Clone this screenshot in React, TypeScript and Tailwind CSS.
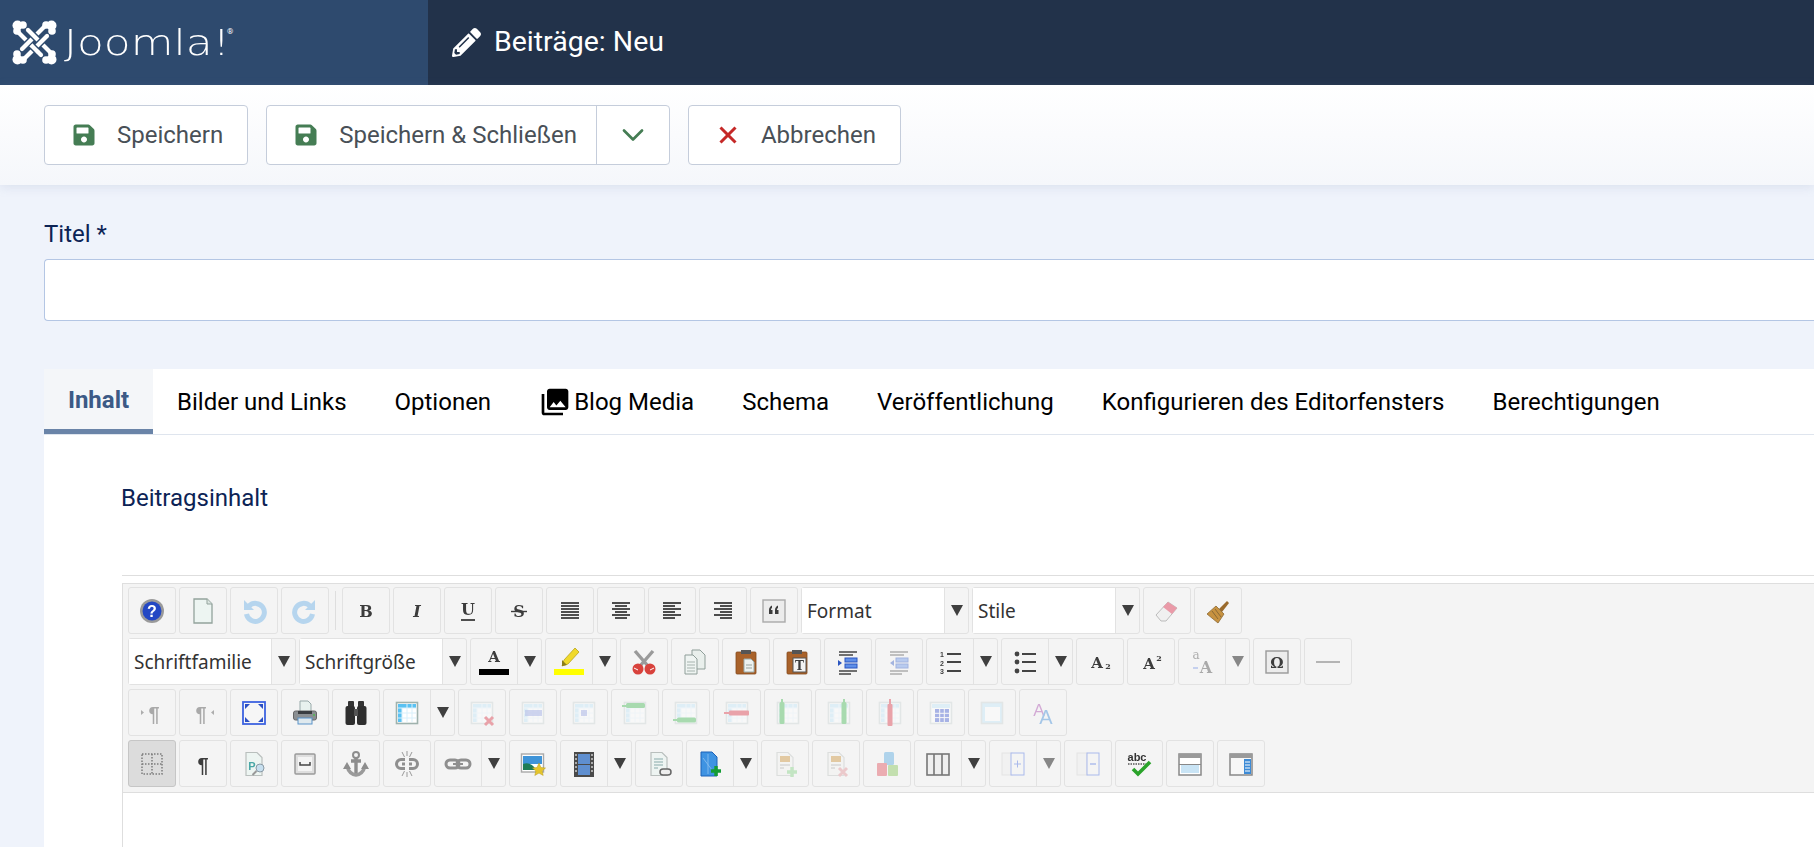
import { ReactNode } from 'react';
import { ChevronDown, X } from 'lucide-react';
import { FaPencilAlt, FaSave } from 'react-icons/fa';
import { MdPhotoLibrary } from 'react-icons/md';

const tabs = ['Bilder und Links', 'Optionen', 'Blog Media', 'Schema', 'Veröffentlichung', 'Konfigurieren des Editorfensters', 'Berechtigungen'];

function Ico({ children, dim }: { children: ReactNode; dim?: boolean }) {
    return (
        <svg viewBox="0 0 28 28" className={`h-[28px] w-[28px] blur-[0.4px] ${dim ? 'opacity-40' : ''}`}>
            {children}
        </svg>
    );
}

function Glyph({ t, font = 'DejaVu Serif', size = 16, bold = true, italic = false, y = 20, x = 14 }: { t: string; font?: string; size?: number; bold?: boolean; italic?: boolean; y?: number; x?: number }) {
    return (
        <text x={x} y={y} textAnchor="middle" fontFamily={font} fontSize={size} fontWeight={bold ? 700 : 400} fontStyle={italic ? 'italic' : 'normal'} fill="#3c3c3c">
            {t}
        </text>
    );
}

function Lines({ rows, color = '#3a3a3a' }: { rows: number[][]; color?: string }) {
    return (
        <g stroke={color} strokeWidth="1.8">
            {rows.map(([x, w], i) => (
                <line key={i} x1={x} x2={x + w} y1={6 + i * 3} y2={6 + i * 3} />
            ))}
        </g>
    );
}

function Table({ fill = '#bfe6fb', grid = '#e8f6fd', frame = '#c8d2d2' }: { fill?: string; grid?: string; frame?: string }) {
    return (
        <g>
            <rect x="3.5" y="3.5" width="21" height="21" fill="#fff" stroke={frame} strokeWidth="1.6" />
            <rect x="5" y="5" width="18" height="4" fill={fill} />
            <rect x="5" y="9" width="4" height="14" fill={fill} />
            <g stroke={grid} strokeWidth="1">
                <path d="M9 9v14M14 5v18M19 5v18M5 9h18M5 14h18M5 19h18" />
            </g>
        </g>
    );
}

function Doc({ fill = '#f3f3f1', stroke = '#b9bfbd' }: { fill?: string; stroke?: string }) {
    return <path d="M6 2.5h11l5 5v18H6z" fill={fill} stroke={stroke} strokeWidth="1.2" />;
}

function Clipboard({ children }: { children: ReactNode }) {
    return (
        <g>
            <rect x="4" y="4" width="20" height="22" rx="1" fill="#a9622a" stroke="#84491c" strokeWidth="0.8" />
            <rect x="9" y="2" width="10" height="4" fill="#555" />
            {children}
        </g>
    );
}

const Cross = ({ x = 21, y = 22, c = '#e08a90' }: { x?: number; y?: number; c?: string }) => <path d={`M${x - 4} ${y - 4}l8 8M${x + 4} ${y - 4}l-8 8`} stroke={c} strokeWidth="3" />;
const Plus = ({ x = 21, y = 22, c = '#7bcf7b' }: { x?: number; y?: number; c?: string }) => <path d={`M${x - 5} ${y}h10M${x} ${y - 5}v10`} stroke={c} strokeWidth="3.4" />;

const Icons: Record<string, ReactNode> = {
    help: (
        <Ico>
            <circle cx="14" cy="14" r="12" fill="#9a9a9a" />
            <circle cx="14" cy="14" r="9.5" fill="#2448c4" />
            <text x="14" y="20" textAnchor="middle" fontFamily="Liberation Sans" fontWeight="700" fontSize="16" fill="#fff">?</text>
        </Ico>
    ),
    page: <Ico><path d="M5 2h13l5 5v19H5z" fill="#edf5f2" stroke="#93a39c" strokeWidth="1.3" /><path d="M18 2v5h5" fill="#dce6e2" stroke="#93a39c" /></Ico>,
    undo: <Ico dim><path d="M9 9a9 9 0 1 1-2.5 8" fill="none" stroke="#5aa8e6" strokeWidth="5" /><path d="M4 3v10h10z" fill="#5aa8e6" /></Ico>,
    redo: <Ico dim><path d="M19 9a9 9 0 1 0 2.5 8" fill="none" stroke="#5aa8e6" strokeWidth="5" /><path d="M24 3v10h-10z" fill="#5aa8e6" /></Ico>,
    bold: <Ico><Glyph t="B" /></Ico>,
    italic: <Ico><Glyph t="I" italic /></Ico>,
    underline: <Ico><Glyph t="U" y={18} /><path d="M7 23h14" stroke="#3c3c3c" strokeWidth="1.8" /></Ico>,
    strike: <Ico><Glyph t="S" /><path d="M6 14.5h16" stroke="#3c3c3c" strokeWidth="1.4" /></Ico>,
    justify: <Ico><Lines rows={[[5, 18], [5, 18], [5, 18], [5, 18], [5, 18], [5, 18]]} /></Ico>,
    center: <Ico><Lines rows={[[5, 18], [8, 12], [5, 18], [8, 12], [5, 18], [8, 12]]} /></Ico>,
    left: <Ico><Lines rows={[[5, 18], [5, 12], [5, 18], [5, 12], [5, 18], [5, 12]]} /></Ico>,
    right: <Ico><Lines rows={[[5, 18], [11, 12], [5, 18], [11, 12], [5, 18], [11, 12]]} /></Ico>,
    quote: (
        <Ico>
            <rect x="3" y="3" width="22" height="22" fill="#ececec" stroke="#aaa" strokeWidth="1.4" />
            <path d="M9 17v-4c0-2 1-3.500 3-4.500v2.500c-.7.400-1 .900-1 2h1.500v4zM15 17v-4c0-2 1-3.500 3-4.500v2.500c-.7.400-1 .900-1 2h1.500v4z" fill="#3c3c3c" />
        </Ico>
    ),
    eraser: (
        <Ico>
            <path d="M3 18 15 5l9 6-11 13H8z" fill="#f0f0f0" stroke="#bbb" />
            <path d="M15 5l9 6-5 6-9-7z" fill="#ea9aa8" />
        </Ico>
    ),
    brush: (
        <Ico>
            <path d="M15 12 23 4l2 2-7 9z" fill="#9a6a2c" />
            <path d="M12 9l8 8-6 9L3 17z" fill="#c79240" stroke="#8b6a35" strokeWidth="0.8" />
            <path d="M8 14l6 8M11 12l6 8" stroke="#8b6a35" />
        </Ico>
    ),
    cut: (
        <Ico>
            <path d="M5 3l13 15M23 3 10 18" stroke="#9a9a9a" strokeWidth="3.4" />
            <circle cx="8" cy="21" r="5.5" fill="#d8423c" />
            <circle cx="20" cy="21" r="5.5" fill="#d8423c" />
            <path d="M4 20l4 2M24 20l-4 2" stroke="#fff" strokeWidth="1" />
        </Ico>
    ),
    copy: (
        <Ico>
            <path d="M11 2h8l5 5v14H11z" fill="#e9efec" stroke="#8f9e99" />
            <path d="M4 7h8l4 4v15H4z" fill="#eff4f2" stroke="#8f9e99" />
            <path d="M6 14h8M6 17h8M6 20h8M6 23h8" stroke="#a6b3ae" />
        </Ico>
    ),
    paste: <Ico><Clipboard><path d="M12 11h7l3 3v10H12z" fill="#edf2f0" stroke="#9aa" /><path d="M14 17h6M14 20h6" stroke="#99a5a0" /></Clipboard></Ico>,
    pasteText: <Ico><Clipboard><rect x="10" y="10" width="13" height="14" fill="#f3f3f3" stroke="#555" /><Glyph t="T" size={12} x={16.5} y={22} /></Clipboard></Ico>,
    indent: (
        <Ico>
            <path d="M5 4h18M5 7h14M5 23h18M5 26h12" stroke="#444" strokeWidth="1.6" />
            <rect x="11" y="10" width="12" height="4" fill="#5f8fe8" stroke="#2b55c0" />
            <rect x="11" y="16" width="12" height="4" fill="#5f8fe8" stroke="#2b55c0" />
            <path d="M4 12v6l4-3z" fill="#2b55c0" />
        </Ico>
    ),
    outdent: (
        <Ico dim>
            <path d="M5 4h18M5 7h14M5 23h18M5 26h12" stroke="#444" strokeWidth="1.6" />
            <rect x="11" y="10" width="12" height="4" fill="#5f8fe8" stroke="#2b55c0" />
            <rect x="11" y="16" width="12" height="4" fill="#5f8fe8" stroke="#2b55c0" />
            <path d="M9 12v6l-4-3z" fill="#2b55c0" />
        </Ico>
    ),
    ol: (
        <Ico>
            <Glyph t="1" size={7} x={6} y={9} font="Liberation Sans" />
            <Glyph t="2" size={7} x={6} y={17.5} font="Liberation Sans" />
            <Glyph t="3" size={7} x={6} y={26} font="Liberation Sans" />
            <path d="M11 6h14M11 14h14M11 23h14" stroke="#444" strokeWidth="1.8" />
        </Ico>
    ),
    ul: (
        <Ico>
            <circle cx="6" cy="6" r="2.4" fill="#444" /><circle cx="6" cy="14" r="2.4" fill="#444" /><circle cx="6" cy="23" r="2.4" fill="#444" />
            <path d="M11 6h14M11 14h14M11 23h14" stroke="#444" strokeWidth="1.8" />
        </Ico>
    ),
    sub: <Ico><Glyph t="A" size={15} x={11} y={20} /><Glyph t="2" size={8} x={22} y={21} /></Ico>,
    sup: <Ico><Glyph t="A" size={15} x={12} y={21} /><Glyph t="2" size={8} x={22} y={13} /></Ico>,
    fontCase: <Ico dim><Glyph t="a" size={12} x={8} y={11} bold={false} /><Glyph t="A" size={16} x={18} y={25} /><path d="M5 20h5" stroke="#5a7fe0" strokeWidth="1.5" /></Ico>,
    omega: <Ico><rect x="3" y="3" width="22" height="22" fill="#ececec" stroke="#999" strokeWidth="1.4" /><Glyph t="Ω" size={15} y={20} /></Ico>,
    hr: <Ico><path d="M2 14h24" stroke="#a4a4a4" strokeWidth="1.6" /></Ico>,
    textColor: <Ico><Glyph t="A" size={15} y={17} /></Ico>,
    highlight: <Ico><path d="M20 3l4 4-11 12-6 2 2-6z" fill="#f0d92b" stroke="#b9a41c" strokeWidth="0.8" /><path d="M7 15l5 5-5 1z" fill="#8a7d1a" /></Ico>,
    ltr: <Ico dim><Glyph t="¶" size={20} x={16} y={22} font="Liberation Sans" /><path d="M3 11v5l3-2.500z" fill="#444" /></Ico>,
    rtl: <Ico dim><Glyph t="¶" size={20} x={12} y={22} font="Liberation Sans" /><path d="M25 11v5l-3-2.500z" fill="#444" /></Ico>,
    full: (
        <Ico>
            <rect x="3" y="3" width="22" height="22" fill="#f6f6f6" stroke="#3d63e0" strokeWidth="1.8" />
            <path d="M5 5h5l-5 5zM23 5h-5l5 5zM5 23h5l-5-5zM23 23h-5l5-5z" fill="#2b4fc4" />
        </Ico>
    ),
    print: (
        <Ico>
            <path d="M9 2h8l3 3v8H9z" fill="#e8f1ee" stroke="#9aa" />
            <rect x="2.500" y="12" width="23" height="9" rx="2" fill="#8b8f92" stroke="#666" />
            <rect x="7" y="12" width="14" height="3" fill="#3a3d40" />
            <rect x="7" y="19" width="14" height="6" fill="#dfe9ee" stroke="#5a93c9" />
            <circle cx="23" cy="16" r="1" fill="#4fbb4f" />
        </Ico>
    ),
    search: (
        <Ico>
            <rect x="6" y="2" width="6" height="7" rx="1" fill="#333" /><rect x="16" y="2" width="6" height="7" rx="1" fill="#333" />
            <rect x="3.500" y="7" width="9.500" height="19" rx="2" fill="#2e2e2e" /><rect x="15" y="7" width="9.500" height="19" rx="2" fill="#2e2e2e" />
            <rect x="12" y="10" width="4" height="7" fill="#555" />
        </Ico>
    ),
    table: <Ico><Table fill="#59c1f2" grid="#d9f0fb" frame="#9fb2ad" /></Ico>,
    tableDel: <Ico dim><Table /><Cross c="#d9293a" /></Ico>,
    tableRowProps: <Ico dim><Table /><rect x="6" y="11" width="17" height="6" fill="#6a7fdc" opacity="0.7" /></Ico>,
    tableCell: <Ico dim><Table /><rect x="11" y="11" width="6" height="6" fill="#6a7fdc" opacity="0.7" /></Ico>,
    rowBefore: <Ico dim><Table /><path d="M1 7h5" stroke="#39b54a" strokeWidth="2" /><rect x="5" y="4" width="19" height="5" rx="1.500" fill="#39b54a" /></Ico>,
    rowAfter: <Ico dim><Table /><path d="M1 21h5" stroke="#39b54a" strokeWidth="2" /><rect x="5" y="18.500" width="19" height="5" rx="1.500" fill="#39b54a" /></Ico>,
    rowDel: <Ico dim><Table /><path d="M1 14h5" stroke="#d9293a" strokeWidth="2" /><rect x="6" y="11.500" width="20" height="5" rx="1" fill="#d9293a" /></Ico>,
    colBefore: <Ico dim><Table /><path d="M8 0v5" stroke="#39b54a" strokeWidth="2" /><rect x="5.500" y="3" width="5" height="22" rx="1.500" fill="#39b54a" /></Ico>,
    colAfter: <Ico dim><Table /><path d="M19 0v5" stroke="#39b54a" strokeWidth="2" /><rect x="16.500" y="3" width="5" height="22" rx="1.500" fill="#39b54a" /></Ico>,
    colDel: <Ico dim><Table /><path d="M14 0v5" stroke="#d9293a" strokeWidth="2" /><rect x="11.500" y="5" width="5" height="22" rx="1" fill="#d9293a" /></Ico>,
    tableGrid: <Ico dim><rect x="3.500" y="3.500" width="21" height="21" fill="#fff" stroke="#c8d2d2" strokeWidth="1.600" /><rect x="5" y="5" width="18" height="4" fill="#bfe6fb" /><rect x="8" y="10" width="14" height="13" fill="#3550d0" /><path d="M8 14.300h14M8 18.600h14M12.700 10v13M17.300 10v13" stroke="#fff" /></Ico>,
    tableBox: <Ico dim><rect x="3.500" y="3.500" width="21" height="21" fill="#bfe6fb" stroke="#c8d2d2" strokeWidth="1.600" /><rect x="7" y="8" width="15" height="14" fill="#fff" /></Ico>,
    styles: <Ico dim><text x="10" y="17" textAnchor="middle" fontFamily="Liberation Sans" fontSize="17" fill="#a23ea8">A</text><text x="17" y="25" textAnchor="middle" fontFamily="Liberation Sans" fontSize="20" fill="#2f83d6">A</text></Ico>,
    blocks: <Ico><g opacity="0.7"><rect x="4" y="4" width="20" height="20" fill="none" stroke="#555" strokeWidth="1.500" strokeDasharray="1.500 1.500" /><path d="M14 4v20M4 14h20" stroke="#555" strokeWidth="1.500" strokeDasharray="1.500 1.500" /></g></Ico>,
    pilcrow: <Ico><Glyph t="¶" size={20} y={22} font="Liberation Sans" /></Ico>,
    preview: <Ico><Doc fill="#edf5f2" /><text x="12" y="20" textAnchor="middle" fontFamily="Liberation Sans" fontWeight="700" fontSize="11" fill="#4aa7a7">P</text><circle cx="20" cy="18" r="4" fill="#c7dfef" stroke="#8b9aa5" /><path d="M16.500 21l-4 4" stroke="#999" strokeWidth="2" /></Ico>,
    pagebreak: <Ico><rect x="4" y="4" width="20" height="20" rx="1" fill="#dedede" stroke="#9a9a9a" strokeWidth="1.500" /><rect x="7" y="7" width="14" height="14" fill="#f4f4f4" /><path d="M9 12v3h10v-3" fill="none" stroke="#444" strokeWidth="1.500" /></Ico>,
    anchor: (
        <Ico>
            <circle cx="14" cy="5" r="3" fill="none" stroke="#8d8d8d" strokeWidth="2" />
            <path d="M14 8v17M9 11h10" stroke="#8d8d8d" strokeWidth="3.4" />
            <path d="M5 16q2 8 9 9q7-1 9-9" fill="none" stroke="#9a9a9a" strokeWidth="3.4" />
            <path d="M1 19l4-7 4 7zM19 19l4-7 4 7z" fill="#8d8d8d" />
        </Ico>
    ),
    unlink: (
        <Ico>
            <g fill="none" stroke="#8f8f8f" strokeWidth="3">
                <path d="M12 9.500H8a4.500 4.500 0 0 0 0 9h4M16 9.500h4a4.500 4.500 0 0 1 0 9h-4" />
                <path d="M9 14h3M16 14h3" />
            </g>
            <path d="M9 2l2.500 5M19 2l-2.500 5M14 1v5M9 26l2.500-5M19 26l-2.500-5M14 27v-5" stroke="#999" strokeWidth="1" />
        </Ico>
    ),
    link: <Ico><rect x="2" y="10" width="13" height="8" rx="4" fill="none" stroke="#8f8f8f" strokeWidth="3" /><rect x="13" y="10" width="13" height="8" rx="4" fill="none" stroke="#8f8f8f" strokeWidth="3" /><path d="M9 14h10" stroke="#8f8f8f" strokeWidth="2" /></Ico>,
    image: <Ico><rect x="2.500" y="4" width="22" height="18" fill="#fff" stroke="#a9a9a9" strokeWidth="1.400" /><rect x="4" y="6" width="19" height="8" fill="#3f94d8" /><path d="M4 20v-6c5-2 10 0 13 6z" fill="#1f7d56" /><path d="M20 13l2 4.500 4.500.500-3.300 3 1 4.500-4.200-2.400-4.200 2.400 1-4.500-3.300-3 4.500-.500z" fill="#e5c52c" stroke="#b89a1d" strokeWidth="0.500" /></Ico>,
    media: <Ico><rect x="4" y="2" width="20" height="25" fill="#4a4a4a" /><rect x="8" y="4" width="12" height="10" fill="#5f8fd0" /><rect x="8" y="15" width="12" height="10" fill="#5f8fd0" /><path d="M5 5h2M5 9h2M5 13h2M5 17h2M5 21h2M21 5h2M21 9h2M21 13h2M21 17h2M21 21h2" stroke="#ccc" strokeWidth="1.500" /></Ico>,
    article: <Ico><Doc fill="#eef4f2" /><path d="M9 9h9M9 12h9M9 15h9M9 18h4" stroke="#8aa" /><rect x="15" y="19" width="11" height="6" rx="3" fill="#eee" stroke="#666" strokeWidth="1.500" /></Ico>,
    template: <Ico><path d="M5 2h11l5 5v19H5z" fill="#3f93e2" stroke="#1d62b8" /><path d="M7 8l9 12M12 4v20" stroke="#8fc2f0" strokeWidth="0.800" /><Plus x={20} y={21} c="#149c34" /></Ico>,
    moduleAdd: <Ico dim><Doc /><rect x="9" y="6" width="10" height="6" fill="#c98b2a" /><path d="M9 15h10M9 18h4" stroke="#888" /><Plus /></Ico>,
    moduleDel: <Ico dim><Doc /><rect x="9" y="6" width="10" height="6" fill="#c98b2a" /><path d="M9 15h10M9 18h4" stroke="#888" /><Cross /></Ico>,
    cubes: <Ico dim><rect x="11" y="2" width="10" height="13" rx="1.500" fill="#4aa3e0" /><rect x="4" y="13" width="10" height="13" rx="1" fill="#e0434f" /><rect x="15" y="15" width="10" height="11" rx="1" fill="#7cc04a" /></Ico>,
    columns: <Ico><rect x="3" y="4" width="22" height="21" fill="#efefef" stroke="#777" strokeWidth="1.600" /><path d="M10 4v21M18 4v21" stroke="#777" strokeWidth="1.600" /></Ico>,
    colAdd: <Ico dim><rect x="3" y="3" width="10" height="22" fill="#eee" stroke="#ccc" /><rect x="12" y="3" width="13" height="22" fill="#f6f6f6" stroke="#3d63e0" /><path d="M15 14h7M18.500 10.500v7" stroke="#3d63e0" /></Ico>,
    colRemove: <Ico dim><rect x="3" y="3" width="10" height="22" fill="#eee" stroke="#ccc" /><rect x="13" y="3" width="12" height="22" fill="#f6f6f6" stroke="#3d63e0" /><path d="M16 14h6" stroke="#3d63e0" strokeWidth="1.400" /></Ico>,
    spell: <Ico><text x="12" y="11" textAnchor="middle" fontFamily="Liberation Sans" fontSize="11" fontWeight="700" fill="#333">abc</text><path d="M3 14h18" stroke="#555" strokeWidth="1.500" strokeDasharray="1.500 1" /><path d="M8 19l5 5L25 12" fill="none" stroke="#2aa32a" strokeWidth="3.600" /></Ico>,
    layout: <Ico><rect x="3" y="4" width="22" height="21" fill="#fff" stroke="#888" strokeWidth="1.500" /><rect x="3" y="4" width="22" height="4" fill="#9a9a9a" /><rect x="5" y="15" width="18" height="8" fill="#c9e4f5" /><path d="M3 14.500h22" stroke="#888" /></Ico>,
    sidebar: <Ico><rect x="3" y="4" width="22" height="21" fill="#f7f7f7" stroke="#888" strokeWidth="1.500" /><rect x="3" y="4" width="22" height="4" fill="#9a9a9a" /><rect x="17" y="9" width="7" height="15" fill="#3d8bd6" /><path d="M18 12h5M18 15h5M18 18h5M18 21h5" stroke="#fff" /></Ico>,
};

function Btn({ icon, active }: { icon: string; active?: boolean }) {
    return (
        <div className={`flex h-[47px] w-[48px] shrink-0 items-center justify-center rounded-[3px] border ${active ? 'border-[#c6c6c6] bg-[#dcdcdc]' : 'border-[#e2e2e2]'}`}>
            {Icons[icon]}
        </div>
    );
}

function Caret({ dim }: { dim?: boolean }) {
    return (
        <svg viewBox="0 0 12 11" className={`h-[11px] w-[12px] ${dim ? 'opacity-60' : ''}`}>
            <path d="M0 0h12L6 11z" fill="#3f3f3f" />
        </svg>
    );
}

function Split({ icon, dim, children }: { icon?: string; dim?: boolean; children?: ReactNode }) {
    return (
        <div className="flex h-[47px] w-[72px] shrink-0 rounded-[3px] border border-[#e2e2e2]">
            <div className="flex w-[47px] flex-col items-center justify-center border-r border-[#e2e2e2]">
                {icon ? Icons[icon] : children}
            </div>
            <div className="flex flex-1 items-center justify-center">
                <Caret dim={dim} />
            </div>
        </div>
    );
}

function Select({ label }: { label: string }) {
    return (
        <div className="flex h-[47px] w-[168px] shrink-0 rounded-[3px] border border-[#e2e2e2]">
            <div className="flex w-[143px] items-center border-r border-[#e2e2e2] bg-white pl-[5px] pt-[2px] font-['Noto_Sans',sans-serif] text-[19px] text-[#333]">
                {label}
            </div>
            <div className="flex flex-1 items-center justify-center">
                <Caret />
            </div>
        </div>
    );
}

function ColorBtn({ icon, color }: { icon: string; color: string }) {
    return (
        <Split>
            <div className="-mb-[4px] -mt-[3px] flex h-[28px] items-center">{Icons[icon]}</div>
            <div className={`h-[6px] w-[30px] ${color}`} />
        </Split>
    );
}

// four woven bands, each ending in a knob at one corner
function JoomlaMark() {
    const arms = [0, 90, 180, 270];
    return (
        <svg viewBox="0 0 45 45" className="h-[45px] w-[45px] shrink-0">
            {arms.map((r) => (
                <g key={r} transform={`rotate(${r} 22.5 22.5)`}>
                    <path d="M4 10 L29 35" fill="none" stroke="#2e4a6e" strokeWidth="7" />
                    <path d="M4 10 L29 35" fill="none" stroke="#fff" strokeWidth="4.2" strokeLinecap="round" />
                    <circle cx="5.5" cy="5.5" r="5" fill="#fff" />
                    <circle cx="11" cy="5" r="3.8" fill="#fff" />
                    <circle cx="5" cy="11" r="3.8" fill="#fff" />
                </g>
            ))}
            <path d="M20 26 L25 31" stroke="#2e4a6e" strokeWidth="7" />
            <path d="M19 25 L26 32" stroke="#fff" strokeWidth="4.2" />
        </svg>
    );
}

function ActionBtn({ icon, label }: { icon: ReactNode; label: string }) {
    return (
        <div className="flex h-[60px] items-center rounded-[4px] border border-[#c5cddb] bg-white pl-[28px] pr-[24px] text-[#495057]">
            <span className="mr-[22px] flex w-[22px] justify-center">{icon}</span>
            {label}
        </div>
    );
}

export default function App() {
    return (
        <div className="h-[847px] overflow-hidden bg-[#eff3fb] font-[Roboto,sans-serif] text-[24px]">
            {/* Header */}
            <header className="flex h-[85px] text-white">
                <div className="flex w-[428px] items-center bg-[#2e4a6e] pl-[12px]">
                    <JoomlaMark />
                    <span className="ml-[7px] w-[163px] origin-left scale-x-[1.22] font-['DejaVu_Sans',sans-serif] text-[36px] font-extralight leading-none">Joomla!</span>
                    <span className="mb-[22px] text-[8px]">®</span>
                </div>
                <div className="flex flex-1 items-center bg-[#22324a] pl-[24px]">
                    <FaPencilAlt className="mr-[13px] h-[29px] w-[29px]" />
                    <span className="text-[28.5px]">Beiträge: Neu</span>
                </div>
            </header>

            {/* Action bar */}
            <div className="relative flex h-[100px] items-center gap-[18px] bg-linear-to-b from-white to-[#f5f7fb] pl-[44px] shadow-[0_2px_10px_rgba(120,140,180,0.18)]">
                <ActionBtn icon={<FaSave className="h-[24px] w-[24px] text-[#457d54]" />} label="Speichern" />
                <div className="flex h-[60px] items-center rounded-[4px] border border-[#c5cddb] bg-white text-[#495057]">
                    <div className="flex h-full items-center border-r border-[#c5cddb] pl-[28px] pr-[19px]">
                        <span className="mr-[22px] flex w-[22px] justify-center">
                            <FaSave className="h-[24px] w-[24px] text-[#457d54]" />
                        </span>
                        Speichern &amp; Schließen
                    </div>
                    <div className="flex w-[72px] justify-center">
                        <ChevronDown className="h-[36px] w-[36px] text-[#457d54]" strokeWidth={1.8} />
                    </div>
                </div>
                <ActionBtn icon={<X className="h-[30px] w-[30px] shrink-0 text-[#c52827]" strokeWidth={2.4} strokeLinecap="butt" />} label="Abbrechen" />
            </div>

            <main className="pl-[44px]">
                <label className="block pt-[34px] leading-[30px] text-[#0c2355]">Titel *</label>
                <div className="mt-[10px] h-[62px] rounded-l-[4px] border border-r-0 border-[#b4c6e4] bg-white" />

                <section className="mt-[48px] bg-white">
                    {/* Tabs */}
                    <div className="flex h-[66px] border-b border-[#dfe5ee] text-black">
                        <div className="flex w-[109px] items-center justify-center border-b-[5px] border-[#6a84a8] bg-[#f4f6f9] pt-[2px] font-bold text-[#3c5a86]">
                            Inhalt
                        </div>
                        {tabs.map((tab) => (
                            <div key={tab} className="flex items-center px-[24px]">
                                {tab === 'Blog Media' && <MdPhotoLibrary className="mr-[3px] h-[32px] w-[32px]" />}
                                {tab}
                            </div>
                        ))}
                    </div>

                    {/* Editor */}
                    <div className="ml-[78px]">
                        <div className="-ml-px pt-[48px] leading-[30px] text-[#0c2355]">Beitragsinhalt</div>
                        <div className="mt-[62px] border-t border-[#dedede] pt-[7px]">
                            <div className="h-[300px] border-l border-[#dedede]">
                                <div className="flex flex-col gap-[4px] border-y border-[#dedede] bg-[#f4f4f4] pb-[5px] pl-[5px] pt-[3px]">
                                    <div className="flex gap-[3px]">
                                        <Btn icon="help" /><Btn icon="page" /><Btn icon="undo" /><Btn icon="redo" />
                                        <div className="mx-[3px] my-[4px] w-px bg-[#dedede]" />
                                        <Btn icon="bold" /><Btn icon="italic" /><Btn icon="underline" /><Btn icon="strike" />
                                        <Btn icon="justify" /><Btn icon="center" /><Btn icon="left" /><Btn icon="right" /><Btn icon="quote" />
                                        <Select label="Format" /><Select label="Stile" />
                                        <Btn icon="eraser" /><Btn icon="brush" />
                                    </div>
                                    <div className="flex gap-[3px]">
                                        <Select label="Schriftfamilie" /><Select label="Schriftgröße" />
                                        <ColorBtn icon="textColor" color="bg-black" />
                                        <ColorBtn icon="highlight" color="bg-[#ffff00]" />
                                        <Btn icon="cut" /><Btn icon="copy" /><Btn icon="paste" /><Btn icon="pasteText" />
                                        <Btn icon="indent" /><Btn icon="outdent" />
                                        <Split icon="ol" /><Split icon="ul" />
                                        <Btn icon="sub" /><Btn icon="sup" />
                                        <Split icon="fontCase" dim />
                                        <Btn icon="omega" /><Btn icon="hr" />
                                    </div>
                                    <div className="flex gap-[3px]">
                                        <Btn icon="ltr" /><Btn icon="rtl" /><Btn icon="full" /><Btn icon="print" /><Btn icon="search" />
                                        <Split icon="table" />
                                        <Btn icon="tableDel" /><Btn icon="tableRowProps" /><Btn icon="tableCell" />
                                        <Btn icon="rowBefore" /><Btn icon="rowAfter" /><Btn icon="rowDel" />
                                        <Btn icon="colBefore" /><Btn icon="colAfter" /><Btn icon="colDel" />
                                        <Btn icon="tableGrid" /><Btn icon="tableBox" /><Btn icon="styles" />
                                    </div>
                                    <div className="flex gap-[3px]">
                                        <Btn icon="blocks" active /><Btn icon="pilcrow" /><Btn icon="preview" /><Btn icon="pagebreak" />
                                        <Btn icon="anchor" /><Btn icon="unlink" />
                                        <Split icon="link" />
                                        <Btn icon="image" />
                                        <Split icon="media" />
                                        <Btn icon="article" />
                                        <Split icon="template" />
                                        <Btn icon="moduleAdd" /><Btn icon="moduleDel" /><Btn icon="cubes" />
                                        <Split icon="columns" />
                                        <Split icon="colAdd" dim />
                                        <Btn icon="colRemove" /><Btn icon="spell" /><Btn icon="layout" /><Btn icon="sidebar" />
                                    </div>
                                </div>
                            </div>
                        </div>
                    </div>
                </section>
            </main>
        </div>
    );
}
